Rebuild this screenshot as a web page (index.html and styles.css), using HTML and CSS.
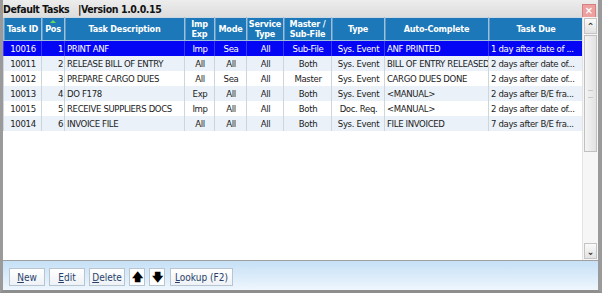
FILE: index.html
```html
<!DOCTYPE html>
<html lang="en">
<head>
    <meta charset="UTF-8">
    <title>Default Tasks</title>
    <link rel="stylesheet" href="styles.css">
</head>
<body>
    <div class="window">
        <div class="titlebar">
            <span class="title">Default Tasks &nbsp;&nbsp;|Version 1.0.0.15</span>
            <span class="close">&#215;</span>
        </div>

        <div class="content">
            <div class="grid">
                <table>
                    <colgroup>
                        <col style="width:38px">
                        <col style="width:23px">
                        <col style="width:120px">
                        <col style="width:30px">
                        <col style="width:32px">
                        <col style="width:37px">
                        <col style="width:48px">
                        <col style="width:53px">
                        <col style="width:104px">
                        <col style="width:95px">
                    </colgroup>
                    <thead>
                        <tr>
                            <th>Task ID</th>
                            <th class="sorted">Pos</th>
                            <th>Task Description</th>
                            <th>Imp<br>Exp</th>
                            <th>Mode</th>
                            <th>Service<br>Type</th>
                            <th>Master /<br>Sub-File</th>
                            <th>Type</th>
                            <th>Auto-Complete</th>
                            <th>Task Due</th>
                        </tr>
                    </thead>
                    <tbody>
                        <tr class="selected">
                            <td class="c">10016</td><td class="r">1</td><td>PRINT ANF</td><td class="c">Imp</td><td class="c">Sea</td><td class="c">All</td><td class="c">Sub-File</td><td class="c">Sys. Event</td><td>ANF PRINTED</td><td>1 day after date of ...</td>
                        </tr>
                        <tr class="alt">
                            <td class="c">10011</td><td class="r">2</td><td>RELEASE BILL OF ENTRY</td><td class="c">All</td><td class="c">All</td><td class="c">All</td><td class="c">Both</td><td class="c">Sys. Event</td><td>BILL OF ENTRY RELEASED</td><td>2 days after date of...</td>
                        </tr>
                        <tr>
                            <td class="c">10012</td><td class="r">3</td><td>PREPARE CARGO DUES</td><td class="c">All</td><td class="c">Sea</td><td class="c">All</td><td class="c">Master</td><td class="c">Sys. Event</td><td>CARGO DUES DONE</td><td>2 days after date of...</td>
                        </tr>
                        <tr class="alt">
                            <td class="c">10013</td><td class="r">4</td><td>DO F178</td><td class="c">Exp</td><td class="c">All</td><td class="c">All</td><td class="c">Both</td><td class="c">Sys. Event</td><td>&lt;MANUAL&gt;</td><td>2 days after B/E fra...</td>
                        </tr>
                        <tr>
                            <td class="c">10015</td><td class="r">5</td><td>RECEIVE SUPPLIERS DOCS</td><td class="c">Imp</td><td class="c">All</td><td class="c">All</td><td class="c">Both</td><td class="c">Doc. Req.</td><td>&lt;MANUAL&gt;</td><td>2 days after date of...</td>
                        </tr>
                        <tr class="alt">
                            <td class="c">10014</td><td class="r">6</td><td>INVOICE FILE</td><td class="c">All</td><td class="c">All</td><td class="c">All</td><td class="c">Both</td><td class="c">Sys. Event</td><td>FILE INVOICED</td><td>7 days after B/E fra...</td>
                        </tr>
                    </tbody>
                </table>
            </div>
            <div class="scrollbar">
                <div class="sb-btn">&#8963;</div>
                <div class="sb-track">
                    <div class="sb-thumb"><span class="grip"></span></div>
                </div>
                <div class="sb-btn">&#8964;</div>
            </div>
        </div>

        <div class="toolbar">
            <button class="btn"><u>N</u>ew</button>
            <button class="btn"><u>E</u>dit</button>
            <button class="btn"><u>D</u>elete</button>
            <button class="btn arrow">&#129093;</button>
            <button class="btn arrow">&#129095;</button>
            <button class="btn wide"><u>L</u>ookup (F2)</button>
        </div>
    </div>
</body>
</html>
```

FILE: styles.css
```css
body {
    margin: 0;
    font-family: Tahoma, "DejaVu Sans Condensed", "Liberation Sans", sans-serif;
    font-size: 10px;
}

.window {
    width: 602px;
    height: 293px;
    box-sizing: border-box;
    background: #f0f0f0;
    border-left: 3px solid #9a9a9a;
    border-right: 4px solid #9a9a9a;
    border-bottom: 3px solid #8e8e8e;
    display: flex;
    flex-direction: column;
}

.titlebar {
    height: 17px;
    display: flex;
    align-items: center;
    justify-content: space-between;
    background: linear-gradient(to bottom, #ededed, #dcdcdc);
}

.title {
    font-weight: bold;
    font-size: 10.5px;
    letter-spacing: -0.4px;
    color: #111;
    padding-left: 0;
}

.close {
    width: 12px;
    height: 12px;
    margin-right: 2px;
    margin-top: 4px;
    background: #eda0a0;
    border: 1px solid #d88080;
    color: #fff;
    font-size: 11px;
    line-height: 11px;
    text-align: center;
    font-weight: bold;
}

.content {
    height: 243px;
    display: flex;
    background: #fff;
    border-bottom: 1px solid #a0a0a0;
}

.grid {
    width: 580px;
    overflow: hidden;
}

table {
    border-collapse: collapse;
    table-layout: fixed;
    width: 580px;
}

th {
    background: #1c78b8;
    color: #fff;
    font-weight: bold;
    font-size: 9px;
    letter-spacing: -0.2px;
    line-height: 10px;
    height: 22px;
    padding: 0;
    border: 1px solid #9fc0d8;
    border-top: 1px solid #c9d8e4;
    box-shadow: inset 1px 0 0 #5c9bc9;
    text-align: center;
    position: relative;
}

th.sorted::before {
    content: "";
    position: absolute;
    top: 2px;
    left: 50%;
    margin-left: -3px;
    border-left: 3px solid transparent;
    border-right: 3px solid transparent;
    border-bottom: 3px solid #5ddc5d;
}

td {
    height: 15px;
    padding: 0 1px 0 2px;
    white-space: nowrap;
    overflow: hidden;
    color: #222;
    font-size: 9.5px;
    letter-spacing: -0.35px;
    border-left: 1px solid #cdd5dd;
    border-right: 1px solid #cdd5dd;
    line-height: 15px;
}

td.c {
    text-align: center;
}

td.r {
    text-align: right;
}

tr.alt td {
    background: #eaf1f8;
}

tr.selected td {
    background: #0505f5;
    color: #fff;
    border-color: #3a3af8;
}

.scrollbar {
    width: 15px;
    display: flex;
    flex-direction: column;
    background: #f6f6f6;
    border-left: 1px solid #e4e4e4;
}

.sb-btn {
    height: 14px;
    margin: 1px;
    border: 1px solid #c4c4c4;
    background: linear-gradient(to bottom, #fafafa, #e2e2e2);
    font-size: 10px;
    line-height: 16px;
    text-align: center;
    color: #333;
    font-weight: bold;
}

.sb-track {
    flex: 1;
}

.sb-thumb {
    height: 115px;
    margin: 0 1px;
    border: 1px solid #c0c0c0;
    background: linear-gradient(to right, #f4f4f4, #e2e2e2);
    display: flex;
    align-items: center;
    justify-content: center;
}

.grip {
    width: 5px;
    height: 6px;
    border-top: 1px solid #c8c8c8;
    border-bottom: 1px solid #c8c8c8;
}

.toolbar {
    flex: 1;
    display: flex;
    align-items: center;
    gap: 4px;
    padding: 0 0 0 6px;
    background: linear-gradient(to bottom, #c6e0f6, #eef6fd);
}

.btn {
    height: 18px;
    width: 36px;
    padding: 0;
    font-family: inherit;
    font-size: 10px;
    color: #2a3f6a;
    background: linear-gradient(to bottom, #ffffff, #eef2f6);
    border: 1px solid #b8c4d0;
    margin-top: 3px;
}

.btn.arrow {
    width: 16px;
    color: #000;
    font-size: 11px;
    font-weight: bold;
    background: #fff;
}

.btn.wide {
    width: 63px;
    margin-left: 1px;
}
```
